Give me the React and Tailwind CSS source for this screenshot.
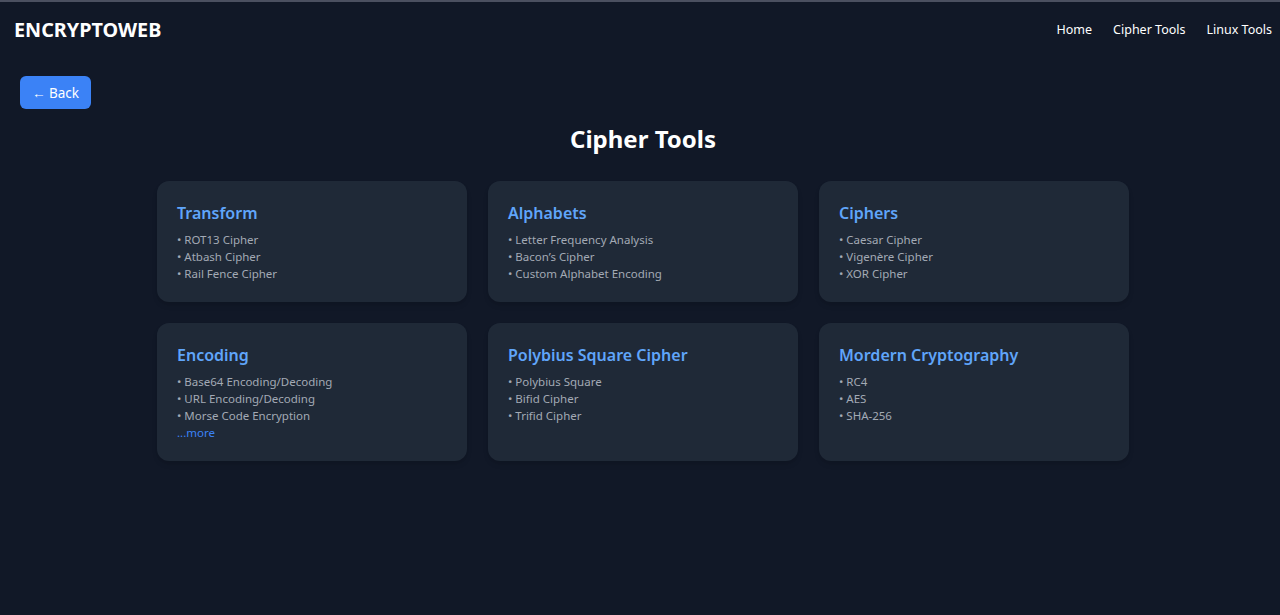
const sections = [
  { title: 'Transform', items: ['ROT13 Cipher', 'Atbash Cipher', 'Rail Fence Cipher'] },
  { title: 'Alphabets', items: ['Letter Frequency Analysis', 'Bacon’s Cipher', 'Custom Alphabet Encoding'] },
  { title: 'Ciphers', items: ['Caesar Cipher', 'Vigenère Cipher', 'XOR Cipher'] },
  { title: 'Encoding', items: ['Base64 Encoding/Decoding', 'URL Encoding/Decoding', 'Morse Code Encryption'], more: true },
  { title: 'Polybius Square Cipher', items: ['Polybius Square', 'Bifid Cipher', 'Trifid Cipher'] },
  { title: 'Mordern Cryptography', items: ['RC4', 'AES', 'SHA-256'] },
];

export default function App() {
  return (
    <div className="min-h-[615px] bg-[#111827] text-white font-['Noto_Sans',sans-serif] border-t-2 border-[#4b5060]">
      {/* Navbar */}
      <nav className="flex h-[56px] items-center justify-between pl-[14px] pr-[8px]">
        <span className="text-[19.8px] font-bold">ENCRYPTOWEB</span>
        <ul className="flex items-center gap-[21px] text-[12.5px]">
          <li>Home</li>
          <li>Cipher Tools</li>
          <li>Linux Tools</li>
        </ul>
      </nav>

      <div className="px-[20px] pt-[18px]">
        <button className="h-[33px] w-[71px] rounded-md bg-[#3b82f6] pt-[1px] text-[13.5px] text-white">
          ← Back
        </button>
      </div>

      <h1 className="mt-[14px] text-center text-[24px] font-bold leading-[32px] pl-[6px]">Cipher Tools</h1>

      {/* Cards */}
      <div className="mx-auto mt-[26px] grid w-[972px] translate-x-[3px] grid-cols-3 gap-[21px]">
        {sections.map((s) => (
          <div key={s.title} className="rounded-xl bg-[#1f2937] px-5 pt-[18px] pb-[20px] shadow-md">
            <h2 className="text-[16px] font-semibold leading-[28px] text-[#60a5fa]">{s.title}</h2>
            <ul className="mt-[4px] text-[11.5px] leading-[17px] text-[#a3aab5]">
              {s.items.map((it) => (
                <li key={it}>• {it}</li>
              ))}
            </ul>
            {s.more && <p className="text-[11.5px] leading-[17px] text-[#3b82f6]">...more</p>}
          </div>
        ))}
      </div>
    </div>
  );
}
